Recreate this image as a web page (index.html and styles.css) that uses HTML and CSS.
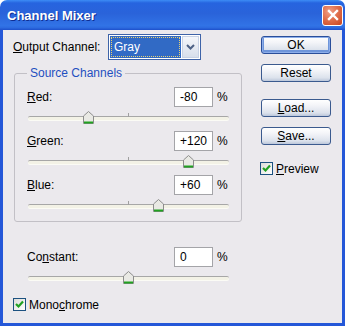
FILE: index.html
```html
<!DOCTYPE html>
<html lang="en">
<head>
    <meta charset="UTF-8">
    <title>Channel Mixer</title>
    <link rel="stylesheet" href="styles.css">
</head>
<body>
<div class="window">
    <div class="title-bar">
        <span class="title">Channel Mixer</span>
        <span class="close">
            <svg width="12" height="12" viewBox="0 0 12 12"><path d="M2 2 L10 10 M10 2 L2 10" stroke="#fff" stroke-width="2.4" stroke-linecap="square"/></svg>
        </span>
    </div>

    <div class="body">
        <div class="left">
            <!-- Output channel -->
            <div class="out-row">
                <span class="out-label"><u>O</u>utput Channel:</span>
                <div class="select">
                    <span class="select-value"><span class="select-focus">Gray</span></span>
                    <span class="select-btn">
                        <svg width="9" height="6" viewBox="0 0 9 6"><path d="M1 1 L4.5 4.5 L8 1" fill="none" stroke="#4D6185" stroke-width="2"/></svg>
                    </span>
                </div>
            </div>

            <!-- Source channels -->
            <fieldset class="group">
                <legend>Source Channels</legend>

                <div class="field">
                    <span class="label"><u>R</u>ed:</span>
                    <span class="num">-80</span>
                    <span class="pct">%</span>
                </div>
                <div class="slider">
                    <div class="track"></div>
                    <span class="tick"></span>
                    <svg class="thumb" style="left: 61px" width="11" height="13" viewBox="0 0 11 13"><path d="M0.5 5 L5.5 0.5 L10.5 5 L10.5 12.5 L0.5 12.5 Z" fill="#E9E9E4" stroke="#8C8C8C"/><path d="M1 11.5 H10" stroke="#21A121" stroke-width="2"/></svg>
                </div>

                <div class="field">
                    <span class="label"><u>G</u>reen:</span>
                    <span class="num">+120</span>
                    <span class="pct">%</span>
                </div>
                <div class="slider">
                    <div class="track"></div>
                    <span class="tick"></span>
                    <svg class="thumb" style="left: 161px" width="11" height="13" viewBox="0 0 11 13"><path d="M0.5 5 L5.5 0.5 L10.5 5 L10.5 12.5 L0.5 12.5 Z" fill="#E9E9E4" stroke="#8C8C8C"/><path d="M1 11.5 H10" stroke="#21A121" stroke-width="2"/></svg>
                </div>

                <div class="field">
                    <span class="label"><u>B</u>lue:</span>
                    <span class="num">+60</span>
                    <span class="pct">%</span>
                </div>
                <div class="slider">
                    <div class="track"></div>
                    <span class="tick"></span>
                    <svg class="thumb" style="left: 131px" width="11" height="13" viewBox="0 0 11 13"><path d="M0.5 5 L5.5 0.5 L10.5 5 L10.5 12.5 L0.5 12.5 Z" fill="#E9E9E4" stroke="#8C8C8C"/><path d="M1 11.5 H10" stroke="#21A121" stroke-width="2"/></svg>
                </div>
            </fieldset>

            <!-- Constant -->
            <div class="constant">
                <div class="field">
                    <span class="label">Co<u>n</u>stant:</span>
                    <span class="num">0</span>
                    <span class="pct">%</span>
                </div>
                <div class="slider">
                    <div class="track"></div>
                    <svg class="thumb" style="left: 101px" width="11" height="13" viewBox="0 0 11 13"><path d="M0.5 5 L5.5 0.5 L10.5 5 L10.5 12.5 L0.5 12.5 Z" fill="#E9E9E4" stroke="#8C8C8C"/><path d="M1 11.5 H10" stroke="#21A121" stroke-width="2"/></svg>
                </div>
            </div>

            <label class="check mono">
                <span class="box"><svg width="11" height="11" viewBox="0 0 11 11"><path d="M2 5 L4.5 7.5 L9 2.5" fill="none" stroke="#21A121" stroke-width="2.2"/></svg></span>
                <span>Mono<u>c</u>hrome</span>
            </label>
        </div>

        <!-- Buttons -->
        <div class="right">
            <button class="btn btn-default">OK</button>
            <button class="btn btn-reset">Reset</button>
            <button class="btn btn-load"><u>L</u>oad...</button>
            <button class="btn btn-save"><u>S</u>ave...</button>
            <label class="check preview">
                <span class="box"><svg width="11" height="11" viewBox="0 0 11 11"><path d="M2 5 L4.5 7.5 L9 2.5" fill="none" stroke="#21A121" stroke-width="2.2"/></svg></span>
                <span><u>P</u>review</span>
            </label>
        </div>
    </div>
</div>
</body>
</html>
```

FILE: styles.css
```css
/* General */
body {
    margin: 0;
    background: #fff;
    font-family: "Liberation Sans", Arial, sans-serif;
    font-size: 12px;
    color: #000;
}

u {
    text-decoration: underline;
    text-underline-offset: 1px;
}

.window {
    width: 345px;
    height: 326px;
    display: flex;
    flex-direction: column;
}

/* Title bar */
.title-bar {
    height: 30px;
    flex: none;
    display: flex;
    align-items: center;
    justify-content: space-between;
    padding: 0 2px 0 7px;
    border-radius: 7px 7px 0 0;
    background: linear-gradient(180deg, #3C8CF5 0%, #2664DF 10%, #2A63DA 45%, #3173E6 85%, #2D6BE0 92%, #1D4FCB 100%);
}

.title {
    color: #fff;
    font-weight: bold;
    font-size: 13px;
    text-shadow: 1px 1px #0F2E92;
}

.close {
    width: 19px;
    height: 19px;
    display: flex;
    align-items: center;
    justify-content: center;
    border: 1px solid #fff;
    border-radius: 3px;
    background: radial-gradient(circle at 35% 30%, #F0A088 0%, #E0704E 45%, #C9431D 100%);
}

/* Dialog body */
.body {
    flex: 1;
    min-height: 0;
    display: flex;
    padding: 5px 0 0 10px;
    background: #EBE9ED;
    border: solid #2457D8;
    border-width: 0 3px 3px;
}

.left {
    width: 229px;
    display: flex;
    flex-direction: column;
}

.out-row {
    height: 24px;
    display: flex;
    align-items: center;
}

.out-label {
    width: 95px;
}

.select {
    width: 89px;
    height: 22px;
    display: flex;
    padding: 1px;
    border: 1px solid #3E63A8;
    background: #fff;
}

.select-value {
    flex: 1;
    padding: 1px;
    background: #316AC5;
    display: flex;
}

.select-focus {
    flex: 1;
    display: flex;
    align-items: center;
    padding-left: 3px;
    outline: 1px dotted #E8D070;
    outline-offset: -1px;
    color: #fff;
}

.select-btn {
    width: 17px;
    margin-left: 1px;
    display: flex;
    align-items: center;
    justify-content: center;
    background: linear-gradient(180deg, #F4F6FA, #D8DFEB);
    border: 1px solid #C8D2E4;
    box-sizing: border-box;
}

/* Group box */
.group {
    margin: 7px 0 0 1px;
    width: 228px;
    box-sizing: border-box;
    padding: 7px 12px 2px 12px;
    border: 1px solid #C2C0C6;
    border-radius: 3px;
    min-width: 0;
}

.group legend {
    padding: 0 3px;
    line-height: 14px;
    color: #1F4FC0;
}

.field {
    height: 20px;
    display: flex;
    align-items: center;
}

.label {
    flex: 1;
}

.num {
    width: 39px;
    height: 20px;
    box-sizing: border-box;
    padding-left: 5px;
    display: flex;
    align-items: center;
    border: 1px solid #A4A4A8;
    background: #fff;
}

.pct {
    width: 12px;
    margin-left: 4px;
}

/* Sliders */
.slider {
    position: relative;
    height: 24px;
    box-sizing: border-box;
    padding-top: 9px;
}

.track {
    margin-left: 1px;
    height: 3px;
    border-top: 1px solid #A7A7A7;
    border-radius: 2px;
    background: #F3F2E6;
    box-shadow: 0 1px 0 #FBFBF5;
}

.tick {
    position: absolute;
    left: 101px;
    top: 6px;
    width: 1px;
    height: 4px;
    background: #A0A0A0;
}

.thumb {
    position: absolute;
    top: 4px;
    margin-left: -5px;
}

.constant {
    margin-top: 25px;
    padding: 0 13px 0 14px;
}

/* Checkboxes */
.check {
    display: flex;
    align-items: center;
    gap: 3px;
}

.box {
    width: 13px;
    height: 13px;
    box-sizing: border-box;
    border: 1px solid #1C5180;
    background: linear-gradient(135deg, #DCDCD7, #fff);
    display: flex;
    align-items: center;
    justify-content: center;
}

.mono {
    margin-top: 7px;
    height: 13px;
}

/* Right column buttons */
.right {
    margin-left: 19px;
    width: 70px;
    display: flex;
    flex-direction: column;
}

.btn {
    width: 70px;
    height: 18px;
    padding: 0;
    font-family: inherit;
    font-size: 12px;
    color: #000;
    border: 1px solid #3B5A8E;
    border-radius: 3px;
    background: linear-gradient(180deg, #FFFFFF 0%, #F3F4F8 35%, #DCE2EC 80%, #BCC7DA 100%);
}

.btn-default {
    margin-top: 1px;
    border-color: #2A4E9A;
    box-shadow: inset 0 0 0 1px #8DAEEA, inset 0 -1px 0 2px #6E95DA;
}

.btn-reset,
.btn-save {
    margin-top: 10px;
}

.btn-load {
    margin-top: 17px;
}

.preview {
    margin-top: 17px;
    height: 13px;
    margin-left: -1px;
}
```
